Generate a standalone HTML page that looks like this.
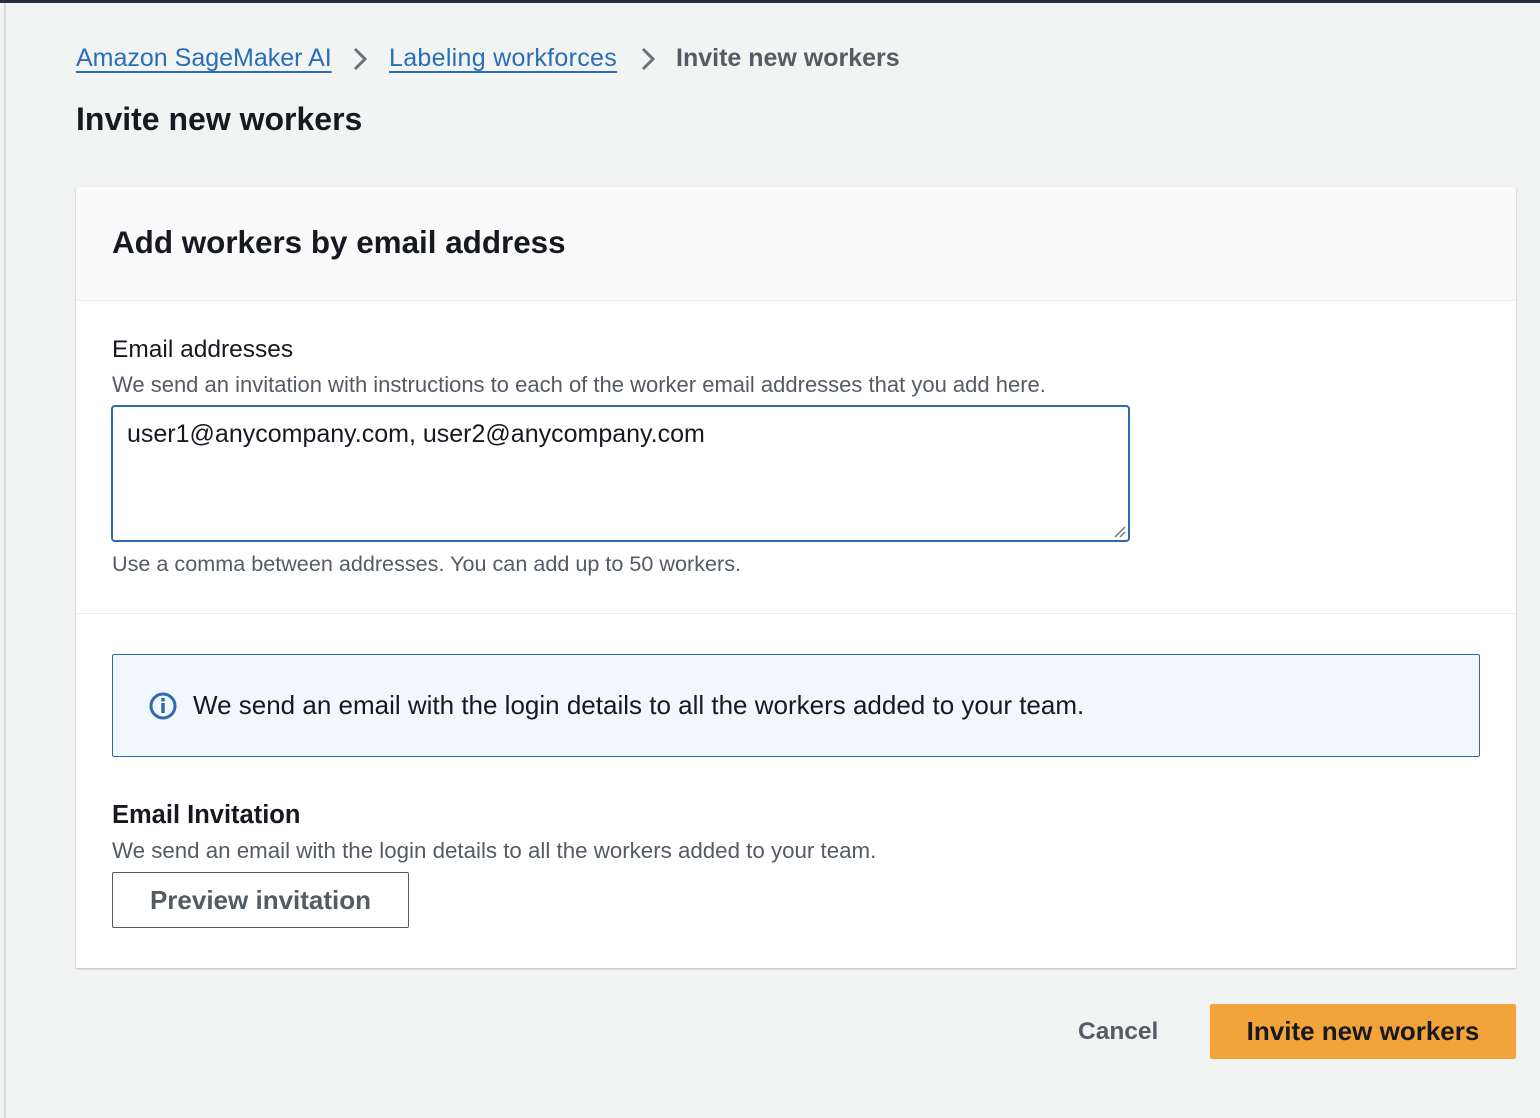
<!DOCTYPE html>
<html><head><meta charset="utf-8"><style>
*{box-sizing:border-box;margin:0;padding:0}
body{width:1540px;height:1118px;background:#f2f3f3;font-family:"Liberation Sans",sans-serif;position:relative;overflow:hidden;color:#16191f}
.top{position:absolute;left:0;top:0;width:1540px;height:3px;background:#232f3e}
.lb{position:absolute;left:4px;top:3px;width:2px;height:1115px;background:#d5dbdb}
.a{position:absolute;white-space:nowrap}
.bc{font-size:25px;top:44px;color:#2a6fb5;text-decoration:underline;text-underline-offset:5px;text-decoration-thickness:2px}
.card{position:absolute;left:76px;top:187px;width:1440px;height:781px;background:#fff;box-shadow:0 1px 2px rgba(0,0,0,.25)}
.hd{position:absolute;left:0;top:0;width:1440px;height:114px;background:#fafafa;border-bottom:1px solid #eaeded}
.sep{position:absolute;left:0;top:426px;width:1440px;height:1px;background:#eaeded}
</style></head><body>
<div class="top"></div><div class="lb"></div>
<div class="a bc" style="left:76px">Amazon SageMaker AI</div>
<svg class="a" style="left:352px;top:47px" width="16" height="24"><path d="M3 2l10 10-10 10" stroke="#687078" stroke-width="3" fill="none"/></svg>
<div class="a bc" style="left:389px;letter-spacing:0.3px">Labeling workforces</div>
<svg class="a" style="left:640px;top:47px" width="16" height="24"><path d="M3 2l10 10-10 10" stroke="#687078" stroke-width="3" fill="none"/></svg>
<div class="a" style="left:676px;top:44px;font-size:25px;font-weight:bold;color:#545b64">Invite new workers</div>
<div class="a" style="left:76px;top:101px;font-size:32px;font-weight:bold">Invite new workers</div>
<div class="card">
<div class="hd"><div class="a" style="left:36px;top:38px;font-size:31.4px;font-weight:bold">Add workers by email address</div></div>
<div class="a" style="left:36px;top:149px;font-size:24.5px">Email addresses</div>
<div class="a" style="left:36px;top:185px;font-size:22px;color:#545b64">We send an invitation with instructions to each of the worker email addresses that you add here.</div>
<div class="a" style="left:35px;top:218px;width:1019px;height:137px;border:2px solid #2d6ab0;border-radius:4px;padding:13px 14px;font-size:25px">user1@anycompany.com, user2@anycompany.com
<svg style="position:absolute;right:2px;bottom:2px" width="14" height="14"><path d="M13 3L3 13M13 8L8 13" stroke="#777" stroke-width="1.5"/></svg></div>
<div class="a" style="left:36px;top:364px;font-size:21.6px;color:#545b64">Use a comma between addresses. You can add up to 50 workers.</div>
<div class="sep"></div>
<div class="a" style="left:36px;top:467px;width:1368px;height:103px;background:#f1f8fd;border:1px solid #2d6ab0;border-radius:2px"></div>
<svg class="a" style="left:72px;top:504px" width="30" height="30"><circle cx="15" cy="15" r="12" stroke="#2d6ab0" stroke-width="3" fill="none"/><rect x="13.3" y="12" width="3.4" height="10" fill="#2d6ab0"/><rect x="13.3" y="7" width="3.4" height="3.4" fill="#2d6ab0"/></svg>
<div class="a" style="left:117px;top:503px;font-size:26px">We send an email with the login details to all the workers added to your team.</div>
<div class="a" style="left:36px;top:614px;font-size:25.5px;font-weight:bold">Email Invitation</div>
<div class="a" style="left:36px;top:651px;font-size:22.3px;color:#545b64">We send an email with the login details to all the workers added to your team.</div>
<div class="a" style="left:36px;top:685px;width:297px;height:56px;border:1px solid #545b64;border-radius:2px;font-size:26px;font-weight:bold;color:#545b64;text-align:center;line-height:54px">Preview invitation</div>
</div>
<div class="a" style="left:1078px;top:1018px;font-size:24.5px;font-weight:bold;color:#545b64">Cancel</div>
<div class="a" style="left:1210px;top:1004px;width:306px;height:55px;background:#f2a33a;border-radius:2px;font-size:26px;font-weight:bold;color:#16191f;text-align:center;line-height:55px">Invite new workers</div>
</body></html>
